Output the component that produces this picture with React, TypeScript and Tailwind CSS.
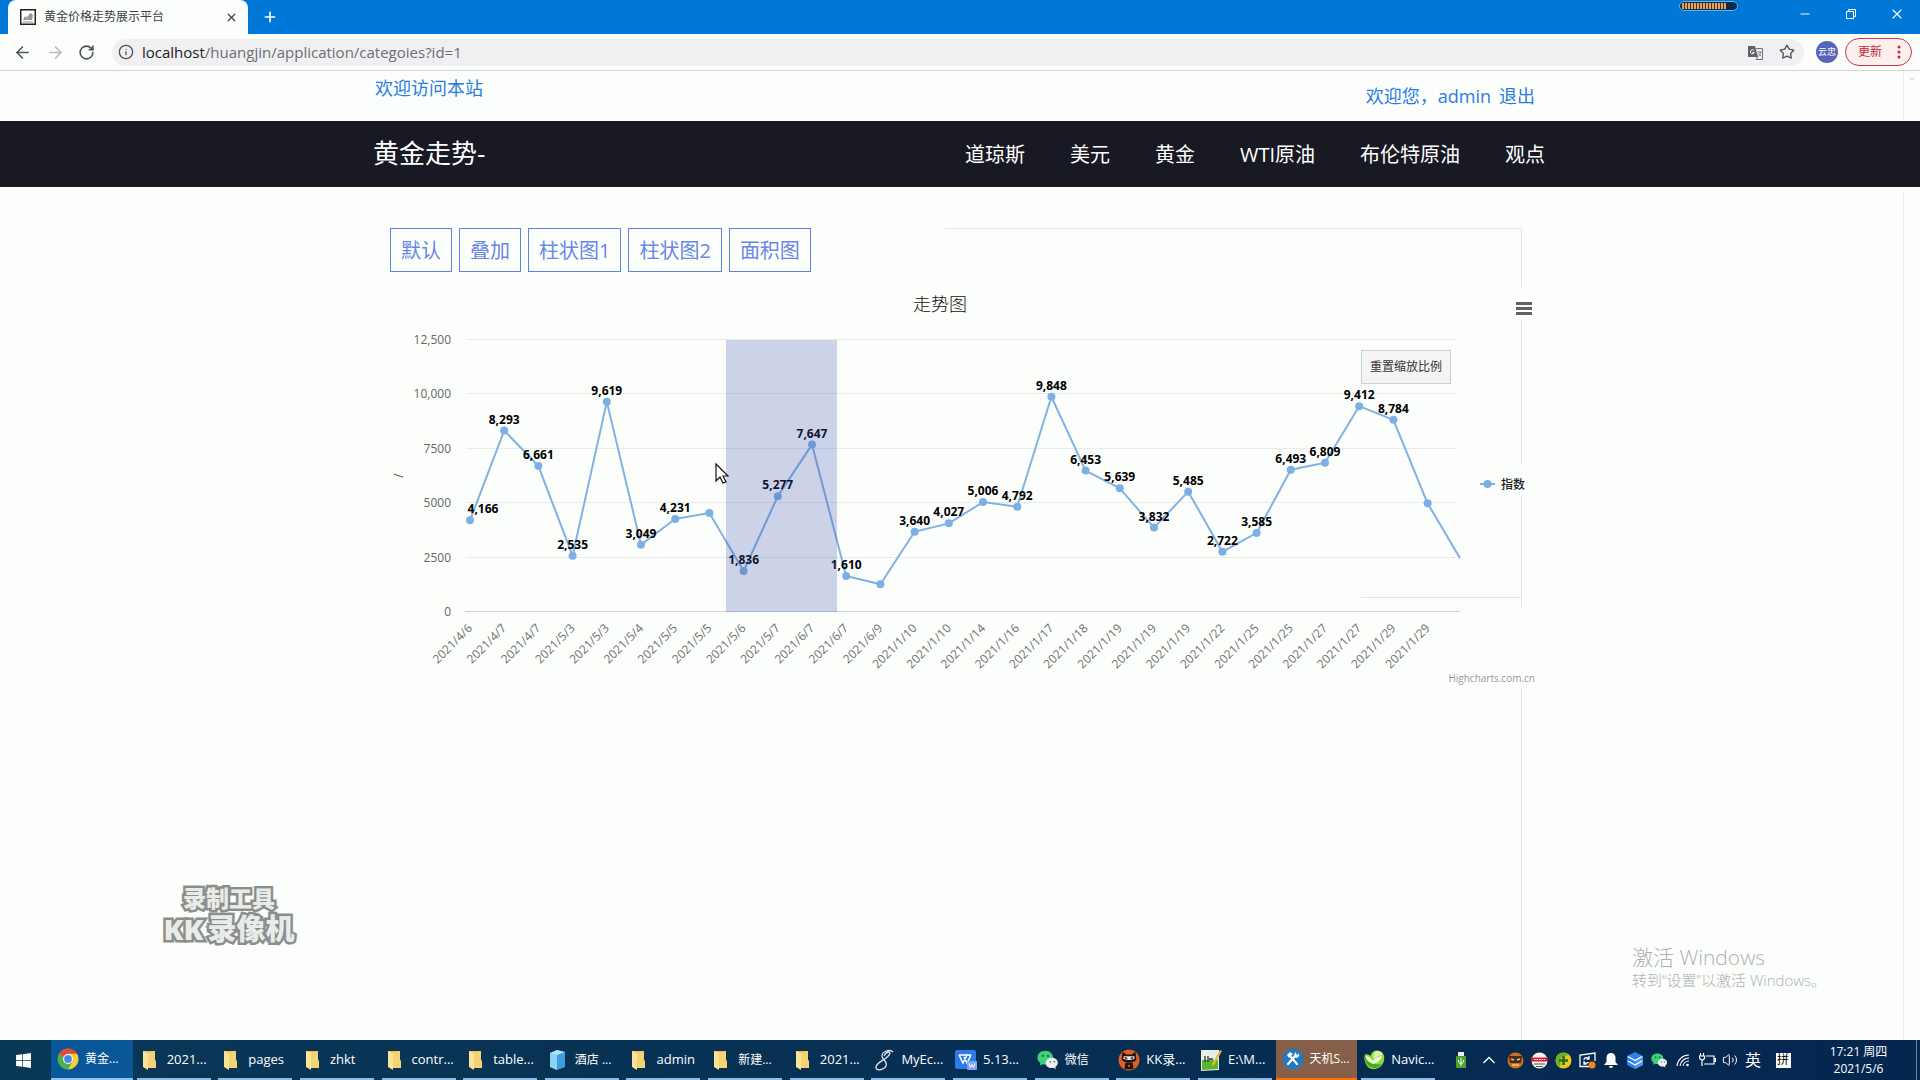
import React from "react";
import { ArrowLeft, ArrowRight, RotateCw, Info, Star, X, Plus, Minus, ChevronUp, Volume2 } from "lucide-react";
import { FaWindows } from "react-icons/fa";

const points: { date: string; value: number; label?: string; dx?: number }[] = [
  { date: "2021/4/6", value: 4166, label: "4,166", dx: 13 },
  { date: "2021/4/7", value: 8293, label: "8,293" },
  { date: "2021/4/7", value: 6661, label: "6,661" },
  { date: "2021/5/3", value: 2535, label: "2,535" },
  { date: "2021/5/3", value: 9619, label: "9,619" },
  { date: "2021/5/4", value: 3049, label: "3,049" },
  { date: "2021/5/5", value: 4231, label: "4,231" },
  { date: "2021/5/5", value: 4500 },
  { date: "2021/5/6", value: 1836, label: "1,836" },
  { date: "2021/5/7", value: 5277, label: "5,277" },
  { date: "2021/6/7", value: 7647, label: "7,647" },
  { date: "2021/6/7", value: 1610, label: "1,610" },
  { date: "2021/6/9", value: 1230 },
  { date: "2021/1/10", value: 3640, label: "3,640" },
  { date: "2021/1/10", value: 4027, label: "4,027" },
  { date: "2021/1/14", value: 5006, label: "5,006" },
  { date: "2021/1/16", value: 4792, label: "4,792" },
  { date: "2021/1/17", value: 9848, label: "9,848" },
  { date: "2021/1/18", value: 6453, label: "6,453" },
  { date: "2021/1/19", value: 5639, label: "5,639" },
  { date: "2021/1/19", value: 3832, label: "3,832" },
  { date: "2021/1/19", value: 5485, label: "5,485" },
  { date: "2021/1/22", value: 2722, label: "2,722" },
  { date: "2021/1/25", value: 3585, label: "3,585" },
  { date: "2021/1/25", value: 6493, label: "6,493" },
  { date: "2021/1/27", value: 6809, label: "6,809" },
  { date: "2021/1/27", value: 9412, label: "9,412" },
  { date: "2021/1/29", value: 8784, label: "8,784" },
  { date: "2021/1/29", value: 4950 },
];

const ticks: [number, string][] = [
  [12500, "12,500"],
  [10000, "10,000"],
  [7500, "7500"],
  [5000, "5000"],
  [2500, "2500"],
];

const px = (i: number) => 111 + i * 34.2;
const py = (v: number) => 339 - (v / 12500) * 272;

function Chart() {
  const line = points.map((p, i) => `${px(i)},${py(p.value)}`).join(" ") + ` 1101,${py(2430)}`;
  return (
    <div className="relative">
      <svg viewBox="0 0 1186 420" className="block w-full" role="img" aria-label="走势图">
        <text x="581" y="39" textAnchor="middle" fontSize="18" fontWeight="300" fill="#111">走势图</text>
        {ticks.map(([v, t]) => (
          <g key={v}>
            <line x1="107" x2="1097" y1={Math.round(py(v)) + 0.5} y2={Math.round(py(v)) + 0.5} stroke="#e9ebea" />
            <text x="92" y={py(v) + 5} textAnchor="end" fontSize="12" fill="#666">{t}</text>
          </g>
        ))}
        <text x="92" y="344" textAnchor="end" fontSize="12" fill="#666">0</text>
        <line x1="106" x2="1101" y1="339.5" y2="339.5" stroke="#ccd0d4" />
        <text transform="translate(44 206) rotate(-90)" fontSize="13" fill="#555">/</text>
        <polyline points={line} fill="none" stroke="#82b1e2" strokeWidth="2" strokeLinejoin="round" />
        {points.map((p, i) => (
          <g key={i}>
            <circle cx={px(i)} cy={py(p.value)} r="4" fill="#7cb0e4" />
            <text transform={`translate(${px(i) + 3} 357) rotate(-45)`} textAnchor="end" fontSize="12" fill="#707070">{p.date}</text>
          </g>
        ))}
        {points.map((p, i) =>
          p.label ? (
            <text key={i} x={px(i) + (p.dx ?? 0)} y={py(p.value) - 7} textAnchor="middle" fontSize="12" fontWeight="700" fill="#000">{p.label}</text>
          ) : null
        )}
        <rect x="367" y="68" width="111" height="272" fill="rgba(60,85,170,0.25)" />
        <line x1="1121" x2="1136" y1="212" y2="212" stroke="#7cb0e4" strokeWidth="2" />
        <circle cx="1128.5" cy="212" r="4" fill="#7cb0e4" />
        <text x="1142" y="217" fontSize="12" fontWeight="500" fill="#222">指数</text>
        <text x="1176" y="410" textAnchor="end" fontSize="10" fill="#999">Highcharts.com.cn</text>
        <path d="M357 192v17l4-4 3 6 3-1-3-6h5z" fill="#fff" stroke="#111" strokeWidth="1.2" />
      </svg>
      <button className="absolute top-[78px] right-[94px] h-[34px] w-[90px] border border-[#cccfcd] bg-[#f3f4f3] text-xs text-[#333]">重置缩放比例</button>
      <button aria-label="图表菜单" className="absolute top-[24px] right-[7px] flex h-[24px] w-[28px] flex-col items-center justify-center gap-[2px] bg-[#fcfefc]">
        <span className="h-[3px] w-4 bg-[#626262]" />
        <span className="h-[3px] w-4 bg-[#626262]" />
        <span className="h-[3px] w-4 bg-[#626262]" />
      </button>
    </div>
  );
}

const Folder = () => (
  <svg width="22" height="22" viewBox="0 0 22 22">
    <path d="M4 2h12v9l1 1v6H4z" fill="#e9c25c" />
    <path d="M4 2l5 2v17l-5-3z" fill="#fbe398" />
    <path d="M9 4l7-2v9l1 1v7H9z" fill="#f4d374" />
  </svg>
);
const Chrome = () => (
  <svg width="22" height="22" viewBox="0 0 22 22">
    <circle cx="11" cy="11" r="10.5" fill="#4caf50" />
    <path d="M11 11L1.9 5.8A10.5 10.5 0 0 1 20.1 5.8z" fill="#e14a3a" />
    <path d="M11 5.8h9.1A10.5 10.5 0 0 1 11 21.5l4.5-8z" fill="#fbcc35" />
    <circle cx="11" cy="11" r="5" fill="#fff" />
    <circle cx="11" cy="11" r="3.9" fill="#4688ee" />
  </svg>
);
const Cube = () => (
  <svg width="22" height="22" viewBox="0 0 22 22">
    <path d="M3 4l7-3 8 2v15l-8 3-7-3z" fill="#3d9fe0" />
    <path d="M3 4l7 2v15l-7-3z" fill="#8ed2f8" />
    <path d="M3 4l7-3 8 2-8 3z" fill="#b4e3fb" />
  </svg>
);
const MyEclipse = () => (
  <svg width="22" height="22" viewBox="0 0 22 22" fill="none" stroke="#dfe6ee" strokeWidth="1.3">
    <path d="M20 3C17 0 9 2 9 7c0 4 6 5 4 10-2 4-9 5-10 2-1-4 6-7 10-10 3-2 5-5 3-6-2 0-4 2-5 4" />
  </svg>
);
const Wps = () => (
  <svg width="22" height="22" viewBox="0 0 22 22">
    <rect x="0" y="1" width="21" height="19" rx="2" fill="#2c7be8" />
    <path d="M4 6h12M4 6l4 8 4-8M9 8l3 6 4-8" fill="none" stroke="#fff" strokeWidth="1.5" />
    <rect x="12" y="12" width="10" height="9" rx="1" fill="#7ba6f2" />
    <path d="M14 14.5l1.5 4 1.5-3 1.5 3 1.500-4" fill="none" stroke="#fff" />
  </svg>
);
const WeChat = ({ s = 24 }: { s?: number }) => (
  <svg width={s} height={s} viewBox="0 0 24 24">
    <path d="M9 2C4 2 .5 5 .5 9.500c0 2.300 1 4 3 5.300L3 18l3-1.500c6 1.500 11.500-1.500 11.500-7C17.500 5 14 2 9 2z" fill="#3fd078" />
    <circle cx="6.5" cy="7.5" r="1.2" fill="#0b6b3a" /><circle cx="12" cy="7.5" r="1.2" fill="#0b6b3a" />
    <path d="M16.500 9.500c-4 0-7 2.500-7 5.700 0 3.800 4 6.300 8.500 5.300l2.500 1.500-.5-2.500c5-3.500 2.500-10-3.500-10z" fill="#eef1ee" />
    <circle cx="14.5" cy="14" r="1" fill="#777" /><circle cx="19" cy="14" r="1" fill="#777" />
  </svg>
);
const Ninja = () => (
  <svg width="24" height="24" viewBox="0 0 24 24">
    <circle cx="12" cy="12" r="11.5" fill="#e0601f" />
    <path d="M5 3l4 3h6l4-3 1 8c0 5-16 5-16 0z" fill="#1c1412" />
    <path d="M6 8h12v3l-5 1h-2l-5-1z" fill="#e8e2da" />
    <path d="M7 8.500l4 1.500-3 1zM17 8.500l-4 1.500 3 1z" fill="#1c1412" />
    <path d="M8 15h8l1 7H7z" fill="#1c1412" /><circle cx="12" cy="18.500" r="1.200" fill="#e0601f" />
  </svg>
);
const Notepad = () => (
  <svg width="22" height="24" viewBox="0 0 22 24">
    <path d="M1 2h18v20l-18 1z" fill="#e9efe6" />
    <path d="M2 12h16v9L2 22z" fill="#5cb531" />
    <path d="M5 8v6M8 8v6M9 11h4" stroke="#333" strokeWidth="1.3" />
    <path d="M20 2l2 1-8 14-2 1v-2z" fill="#e6b93a" />
  </svg>
);
const Tools = () => (
  <svg width="22" height="22" viewBox="0 0 22 22">
    <circle cx="11" cy="11" r="10.5" fill="#2179c0" />
    <path d="M6 16l8-9M8 8l7 8" stroke="#fff" strokeWidth="2.2" strokeLinecap="round" />
    <path d="M5 7l3-3 3 2-4 4z" fill="#fff" />
    <path d="M13 9a3.500 3.500 0 0 1 1-5l0 2.500 2 .500 1-2a3.500 3.500 0 0 1-3 5z" fill="#fff" />
  </svg>
);
const Navicat = () => (
  <svg width="24" height="24" viewBox="0 0 24 24">
    <path d="M2 6c3-1 5 0 6 2 1-5 5-7 9-6 5 1 7 6 6 10-1 6-6 10-12 10C5 22 0 14 2 6z" fill="#8ed83a" />
    <path d="M13 3c4-2 8 0 9 4-4-1-7 1-10 5-1-4-1-7 1-9z" fill="#d9f4a6" />
    <path d="M2 8c2 7 9 10 18 8-4 8-18 6-18-8z" fill="#48a81c" />
    <path d="M3 8c3 0 6 2 8 5 2-3 6-5 10-5-2 5-6 8-10 8-4-1-7-4-8-8z" fill="#f1fbe0" />
  </svg>
);

const tasks: { icon: React.ReactNode; text: string; tone?: "blue" | "orange" }[] = [
  { icon: <Chrome />, text: "黄金...", tone: "blue" },
  { icon: <Folder />, text: "2021..." },
  { icon: <Folder />, text: "pages" },
  { icon: <Folder />, text: "zhkt" },
  { icon: <Folder />, text: "contr..." },
  { icon: <Folder />, text: "table..." },
  { icon: <Cube />, text: "酒店 ..." },
  { icon: <Folder />, text: "admin" },
  { icon: <Folder />, text: "新建..." },
  { icon: <Folder />, text: "2021..." },
  { icon: <MyEclipse />, text: "MyEc..." },
  { icon: <Wps />, text: "5.13..." },
  { icon: <WeChat />, text: "微信" },
  { icon: <Ninja />, text: "KK录..." },
  { icon: <Notepad />, text: "E:\\M..." },
  { icon: <Tools />, text: "天机S...", tone: "orange" },
  { icon: <Navicat />, text: "Navic..." },
];

function Task({ icon, text, tone }: { icon: React.ReactNode; text: string; tone?: "blue" | "orange" }) {
  const skin =
    tone === "blue"
      ? "bg-[#095699] border-b-2 border-[#8cc4f4]"
      : tone === "orange"
        ? "bg-[#865f49] border-b-2 border-[#ff7200]"
        : "";
  const size = /^[\x20-\x7e]/.test(text) ? "text-[13px]" : "text-xs";
  return (
    <button className={`relative flex h-full min-w-0 flex-1 items-center gap-1.5 pl-1.5 text-white ${skin}`}>
      <span className="flex w-[22px] flex-none justify-center">{icon}</span>
      <span className={`whitespace-nowrap ${size}`}>{text}</span>
      {!tone && <span className="absolute bottom-0 left-1 h-[2px] w-[74px] bg-[#8fbbe6]" />}
    </button>
  );
}

function Taskbar() {
  return (
    <footer className="flex h-10 flex-none items-stretch bg-linear-to-r from-[#0a3857] to-[#05264f] text-white">
      <button aria-label="开始" className="flex w-[51px] items-center justify-center pr-1"><FaWindows size={17} /></button>
      <div className="flex w-[1388px]">
        {tasks.map((t, i) => <Task key={i} {...t} />)}
      </div>
      <div className="ml-auto flex items-center">
        <span className="flex w-7 justify-center">
          <svg width="12" height="16" viewBox="0 0 12 16"><path d="M3 0h6v4H3z" fill="#eee" /><rect x="1" y="4" width="10" height="12" rx="1" fill="#4da32f" /><path d="M6 6v8M3.5 8v2L6 12l2.5-2V8" stroke="#fff" fill="none" /></svg>
        </span>
        <span className="flex w-7 justify-center">
          <svg width="12" height="8" viewBox="0 0 12 8" fill="none" stroke="#fff" strokeWidth="1.3"><path d="M.5 7L6 1.500 11.500 7" /></svg>
        </span>
        <span className="flex w-6 justify-center">
          <svg width="17" height="17" viewBox="0 0 17 17"><circle cx="8.5" cy="8.5" r="8" fill="#c9701d" /><path d="M2 4h13l-1 7H3z" fill="#4b2a16" /><path d="M4 7l3 1M13 7l-3 1M5 13h7" stroke="#f3c27b" strokeWidth="1.5" /></svg>
        </span>
        <span className="flex w-6 justify-center">
          <svg width="17" height="17" viewBox="0 0 17 17"><circle cx="8.5" cy="8.5" r="8" fill="#f2f2f2" /><path d="M0 5.500h17v4H0z" fill="#d3202e" /><path d="M3 7.500h11" stroke="#fff" strokeDasharray="1.5 1" /><path d="M3 12h11M5 14.500h7" stroke="#555" /></svg>
        </span>
        <span className="flex w-6 justify-center">
          <svg width="17" height="17" viewBox="0 0 17 17"><circle cx="8.5" cy="8.5" r="8" fill="#f4c419" /><path d="M5 1.500a8 8 0 0 0-1 13.500l2-3a5 5 0 0 1 5-8l2-1.500a8 8 0 0 0-8-1z" fill="#63b32c" /><path d="M8.500 4v9M4 8.500h9" stroke="#25701e" strokeWidth="2.6" /></svg>
        </span>
        <span className="flex w-6 justify-center">
          <svg width="17" height="17" viewBox="0 0 17 17" fill="none" stroke="#fff" strokeWidth="1.3"><path d="M16 9V1L1 3v11.500h9M5 8c0-3 4-3 5-1M10 4v3H7.500M5 9v3h2.500M5 10c1 2 4 1 4.500 0" /><circle cx="13" cy="13" r="3.5" fill="#ee8a1e" stroke="none" /></svg>
        </span>
        <span className="flex w-6 justify-center">
          <svg width="14" height="15" viewBox="0 0 14 15" fill="#fff"><path d="M7 0a4.500 4.500 0 0 1 4.500 4.500V9L14 12H0l2.500-3V4.500A4.500 4.500 0 0 1 7 0zM5 13h4a2 2 0 0 1-4 0z" /></svg>
        </span>
        <span className="flex w-6 justify-center">
          <svg width="16" height="17" viewBox="0 0 16 17"><path d="M8 0l8 4v9l-8 4-8-4V4z" fill="#2a7fe8" /><path d="M8 8.500L16 4v9l-8 4z" fill="#4b96ef" /><path d="M1 4.500l7 4 7-4M1 9l7 4 7-4" stroke="#fff" fill="none" strokeWidth="1.400" /></svg>
        </span>
        <span className="flex w-6 justify-center"><WeChat s={17} /></span>
        <span className="flex w-6 justify-center">
          <svg width="14" height="14" viewBox="0 0 14 14" fill="none" stroke="#fff" strokeWidth="1.1"><path d="M1 13A12 12 0 0 1 13 2M4 13a9 9 0 0 1 9-8M7 13a6 6 0 0 1 6-5" /><circle cx="11.5" cy="12" r="1.3" fill="#fff" stroke="none" /></svg>
        </span>
        <span className="flex w-6 justify-center">
          <svg width="17" height="14" viewBox="0 0 17 14" fill="none" stroke="#fff" strokeWidth="1.2"><path d="M7 3h8v8H5M15 5.500h1.500v3H15M1.500 0v3M4.500 0v3M.500 3h5v2.500l-1.500 1.500h-1L.5 5.500zM3 7v6" /></svg>
        </span>
        <span className="flex w-[22px] justify-center"><Volume2 size={16} strokeWidth={1.5} /></span>
        <span className="w-6 text-center text-base">英</span>
        <span className="flex w-9 justify-center"><span className="flex size-[15px] items-center justify-center bg-white text-xs text-black">拼</span></span>
        <div className="w-[115px] text-center text-xs leading-[17px]">
          <div>17:21 周四</div>
          <div>2021/5/6</div>
        </div>
        <span className="h-10 w-1 border-l border-[#6d7f96]" />
      </div>
    </footer>
  );
}

function BrowserChrome() {
  return (
    <header className="flex-none">
      <div className="relative flex h-[34px] items-center bg-[#0078d7] pl-2 text-white">
        <div className="flex h-full w-60 items-center rounded-t-lg bg-[#fcfefc] pr-2.5 pl-3 text-[#3c4043]">
          <svg width="16" height="16" viewBox="0 0 16 16"><rect x=".75" y=".75" width="14.5" height="14.5" fill="#fff" stroke="#222" strokeWidth="1.5" /><path d="M3 11l2-4 2 3 3-6 3 2-1 5z" fill="#9a9688" /><path d="M3 13h10M4 10l8-5" stroke="#8b86b5" /></svg>
          <span className="ml-2 flex-1 text-xs">黄金价格走势展示平台</span>
          <button aria-label="关闭标签页"><X size={13} strokeWidth={2.2} /></button>
        </div>
        <button aria-label="新标签页" className="ml-3.5"><Plus size={16} strokeWidth={2.4} /></button>
        <div className="absolute top-px right-[182px] flex h-2.5 w-[59px] items-center rounded-md border border-[#6cb2e8] bg-[#0a2c50] px-[2px]">
          <span className="h-1.5 w-11 bg-[repeating-linear-gradient(90deg,#e3a457_0_2px,#4a3424_2px_3px)]" />
        </div>
        <div className="ml-auto flex items-center pb-1.5">
          <button aria-label="最小化" className="flex w-[46px] justify-center"><Minus size={14} strokeWidth={1.6} /></button>
          <button aria-label="还原" className="flex w-[46px] justify-center">
            <svg width="10" height="10" viewBox="0 0 10 10" fill="none" stroke="#fff"><path d="M.5 2.500h7v7h-7zM2.500 2.500v-2h7v7h-2" /></svg>
          </button>
          <button aria-label="关闭" className="flex w-[46px] justify-center"><X size={16} strokeWidth={1.7} /></button>
        </div>
      </div>
      <div className="flex h-[37px] items-center border-b border-[#d3d6d9] bg-[#fcfefc] pr-2 pl-[13px] text-[#505356]">
        <button aria-label="后退" className="w-[33px]"><ArrowLeft size={19} /></button>
        <button aria-label="前进" className="w-[32px] text-[#b9bbbd]"><ArrowRight size={19} /></button>
        <button aria-label="重新加载" className="w-[34px]"><RotateCw size={17} strokeWidth={2.3} /></button>
        <div className="flex h-[27px] flex-1 items-center rounded-full bg-[#f0f0f2] pr-[9px] pl-1.5">
          <Info size={16} />
          <div className="ml-2 flex-1 text-[15px] text-[#6b6e72]"><span className="text-[#202124]">localhost</span>/huangjin/application/categoies?id=1</div>
          <button aria-label="翻译">
            <svg width="15" height="15" viewBox="0 0 15 15">
              <path d="M0 1h7l3 11H0z" fill="#5f6368" />
              <path d="M8 3.500h6.500v11H8l2-3" fill="none" stroke="#6f7377" />
              <path d="M6 5.500a2 2 0 1 0 .3 2H4.500" fill="none" stroke="#fff" />
              <path d="M9.500 7h4M12.500 7c0 2-1 3-2 4M10.500 8.500l2.500 2.500" fill="none" stroke="#6f7377" strokeWidth=".9" />
            </svg>
          </button>
          <button aria-label="收藏" className="ml-4"><Star size={16} /></button>
        </div>
        <button className="ml-3 size-[22px] rounded-full bg-[#5864b8] text-[9px] text-white">云忠</button>
        <button className="ml-[7px] flex h-7 w-[67px] items-center justify-between rounded-full border border-[#c5374a] bg-[#fcefee] pr-2.5 pl-3 text-xs text-[#c02638]">
          更新
          <svg width="4" height="14" viewBox="0 0 4 14" fill="#c5283a"><circle cx="2" cy="2" r="1.5" /><circle cx="2" cy="7" r="1.5" /><circle cx="2" cy="12" r="1.5" /></svg>
        </button>
      </div>
    </header>
  );
}

const nav = ["道琼斯", "美元", "黄金", "WTI原油", "布伦特原油", "观点"];
const modes = ["默认", "叠加", "柱状图1", "柱状图2", "面积图"];

export default function App() {
  return (
    <div className="flex min-h-screen flex-col bg-[#fcfefc] font-['Open_Sans','Noto_Sans_CJK_SC',sans-serif]">
      <BrowserChrome />
      <main className="relative flex-1">
        <div className="pr-4">
          <div className="mx-auto flex h-[50px] max-w-[1186px] justify-between pr-2.5 pl-4 text-lg text-[#2a7ce0]">
            <span className="pt-[3px]">欢迎访问本站</span>
            <span className="flex gap-2 pt-[11px]"><span>欢迎您，admin</span><a href="#logout">退出</a></span>
          </div>
        </div>
        <nav className="bg-[#191924] pr-4 text-white">
          <div className="mx-auto flex h-[66px] max-w-[1186px] items-center justify-between pl-3.5">
            <a href="#home" className="pb-[2px] text-[26px]">黄金走势-</a>
            <div className="flex gap-[45px] pt-[2px] text-xl">
              {nav.map((n) => <a key={n} href="#nav">{n}</a>)}
            </div>
          </div>
        </nav>
        <div className="pt-[41px] pr-4">
          <div className="mx-auto max-w-[1186px]">
            <div className="flex gap-[7px] pl-[31px]">
              {modes.map((m) => (
                <button key={m} className="h-11 border border-[#5b82e0] px-2.5 pt-[2px] text-xl text-[#6a86e4]">{m}</button>
              ))}
            </div>
            <Chart />
          </div>
        </div>

        <span className="absolute top-[157px] right-[399px] h-px w-[576px] bg-[#e3e5e4]" />
        <span className="absolute top-[157px] right-[398px] h-[59px] w-px bg-[#e3e5e4]" />
        <span className="absolute top-[249px] right-[398px] h-[145px] w-px bg-[#e3e5e4]" />
        <span className="absolute top-[424px] right-[398px] h-[112px] w-px bg-[#e3e5e4]" />
        <span className="absolute top-[526px] right-[399px] h-px w-[160px] bg-[#e3e5e4]" />
        <span className="absolute top-[617px] right-[398px] bottom-0 w-px bg-[#e3e5e4]" />
        <span className="absolute top-0 right-4 h-[50px] w-px bg-[#eff1f0]" />
        <span className="absolute top-[121px] right-4 bottom-0 w-px bg-[#eff1f0]" />
        <ChevronUp size={8} className="absolute top-1 right-1 text-[#aaa]" />

        <div className="absolute bottom-[94px] left-[161px] flex w-[136px] flex-col items-center font-black whitespace-nowrap text-[#e9ebe9] [-webkit-text-stroke:5px_#8b8f8c] [paint-order:stroke]">
          <div className="text-[23px] leading-[28px]">录制工具</div>
          <div className="flex text-[29px] leading-[34px]"><span>KK</span><span className="pl-1">录像机</span></div>
        </div>
        <div className="absolute right-[95px] bottom-[50px] w-[193px] font-light whitespace-nowrap text-[#aeb1af]">
          <div className="text-[21px] leading-[26px]">激活 Windows</div>
          <div className="text-[15px] leading-[20px]">转到“设置”以激活 Windows。</div>
        </div>
      </main>
      <Taskbar />
    </div>
  );
}
